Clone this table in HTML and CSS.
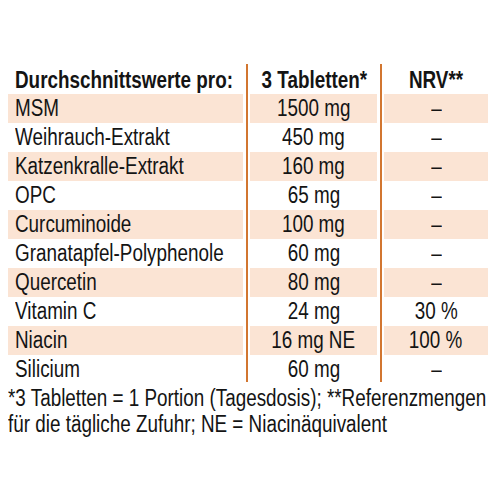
FILE: index.html
```html
<!DOCTYPE html>
<html lang="de">
<head>
    <meta charset="UTF-8">
    <meta name="viewport" content="width=device-width, initial-scale=1.0">
    <title>Nährwerte</title>
    <link rel="stylesheet" href="styles.css">
</head>
<body>
    <div class="facts">
        <div class="row head">
            <div class="name"><span class="t">Durchschnittswerte pro:</span></div>
            <div class="amount"><span class="t">3 Tabletten*</span></div>
            <div class="nrv"><span class="t">NRV**</span></div>
        </div>
        <div class="row alt">
            <div class="name"><span class="t">MSM</span></div>
            <div class="amount"><span class="t">1500 mg</span></div>
            <div class="nrv"><span class="t">–</span></div>
        </div>
        <div class="row">
            <div class="name"><span class="t">Weihrauch-Extrakt</span></div>
            <div class="amount"><span class="t">450 mg</span></div>
            <div class="nrv"><span class="t">–</span></div>
        </div>
        <div class="row alt">
            <div class="name"><span class="t">Katzenkralle-Extrakt</span></div>
            <div class="amount"><span class="t">160 mg</span></div>
            <div class="nrv"><span class="t">–</span></div>
        </div>
        <div class="row">
            <div class="name"><span class="t">OPC</span></div>
            <div class="amount"><span class="t">65 mg</span></div>
            <div class="nrv"><span class="t">–</span></div>
        </div>
        <div class="row alt">
            <div class="name"><span class="t">Curcuminoide</span></div>
            <div class="amount"><span class="t">100 mg</span></div>
            <div class="nrv"><span class="t">–</span></div>
        </div>
        <div class="row">
            <div class="name"><span class="t">Granatapfel-Polyphenole</span></div>
            <div class="amount"><span class="t">60 mg</span></div>
            <div class="nrv"><span class="t">–</span></div>
        </div>
        <div class="row alt">
            <div class="name"><span class="t">Quercetin</span></div>
            <div class="amount"><span class="t">80 mg</span></div>
            <div class="nrv"><span class="t">–</span></div>
        </div>
        <div class="row">
            <div class="name"><span class="t">Vitamin C</span></div>
            <div class="amount"><span class="t">24 mg</span></div>
            <div class="nrv"><span class="t">30 %</span></div>
        </div>
        <div class="row alt">
            <div class="name"><span class="t">Niacin</span></div>
            <div class="amount"><span class="t">16 mg NE</span></div>
            <div class="nrv"><span class="t">100 %</span></div>
        </div>
        <div class="row">
            <div class="name"><span class="t">Silicium</span></div>
            <div class="amount"><span class="t">60 mg</span></div>
            <div class="nrv"><span class="t">–</span></div>
        </div>
    </div>
    <div class="note-box">
        <p class="note">*3 Tabletten = 1 Portion (Tagesdosis); **Referenzmengen für die tägliche Zufuhr; NE = Niacinäquivalent</p>
    </div>
</body>
</html>
```

FILE: styles.css
```css
body {
    margin: 8px;
    background: #ffffff;
    color: #141414;
    font-family: "Liberation Sans", Arial, sans-serif;
    font-size: 23px;
}

/* no condensed face installed, so squeeze the glyphs instead */
.t {
    display: inline-block;
    transform: scaleX(0.82);
}

.facts {
    display: grid;
    grid-template-columns: 235px 127px 104px;
    column-gap: 7px;
    width: 480px;
    margin-top: 56px;
    background:
        linear-gradient(#d27630, #d27630) no-repeat 238px 0 / 2px 318px,
        linear-gradient(#d27630, #d27630) no-repeat 372px 0 / 2px 318px;
}

.row {
    display: contents;
}

.row > div {
    height: 29px;
    line-height: 29px;
    white-space: nowrap;
}

.row.alt > div {
    background: #fbe4d4;
}

.row.head > div {
    height: 30px;
    padding-top: 2px;
    line-height: 28px;
    box-sizing: border-box;
    font-weight: bold;
}

.name {
    padding-left: 7px;
}

.name .t {
    transform-origin: left center;
}

.amount,
.nrv {
    text-align: center;
}

.note-box {
    width: 481px;
    overflow: hidden;
}

.note {
    margin: 1px 0 0;
    width: 586px;
    line-height: 26px;
    transform: scaleX(0.82);
    transform-origin: left top;
}
```
